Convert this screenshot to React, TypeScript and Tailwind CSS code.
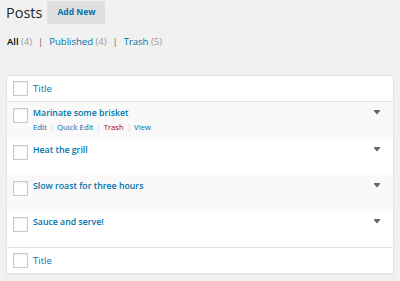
const POSTS = [
  { title: 'Marinate some brisket', actions: true },
  { title: 'Heat the grill' },
  { title: 'Slow roast for three hours' },
  { title: 'Sauce and serve!' },
];

function Checkbox() {
  return (
    <span className="block w-[15px] h-[15px] shrink-0 bg-white border border-[#c9c9c9] shadow-[inset_0_1px_2px_rgba(0,0,0,0.08)]" />
  );
}

function Toggle() {
  return (
    <svg width="6" height="5" viewBox="0 0 6 5" className="block">
      <polygon points="0,0 6,0 6,1 3,4.5 0,1" fill="#666" />
    </svg>
  );
}

export default function App() {
  return (
    <div className="w-[400px] h-[281px] overflow-hidden bg-[#f1f1f1] font-['Open_Sans',sans-serif] text-[#444]">
      <div className="flex items-center h-[23px] mt-[1px] pl-[6px]">
        <h1 className="text-[14.5px] leading-[23px] text-[#23282d] mr-[5px]">Posts</h1>
        <a className="h-[23px] px-[10px] flex items-center bg-[#e0e0e0] text-[8.5px] font-bold text-[#0073aa]">
          Add New
        </a>
      </div>

      <ul className="flex items-center mt-[12px] pl-[7px] text-[9.5px] leading-[12px]">
        <li>
          <span className="font-semibold text-black">All</span>{' '}
          <span className="text-[#999]">(4)</span>
          <span className="mx-[6px] text-[#666]">|</span>
        </li>
        <li>
          <span className="text-[#0073aa]">Published</span>{' '}
          <span className="text-[#999]">(4)</span>
          <span className="mx-[6px] text-[#666]">|</span>
        </li>
        <li>
          <span className="text-[#0073aa]">Trash</span>{' '}
          <span className="text-[#999]">(5)</span>
        </li>
      </ul>

      <div className="mt-[27px] mx-[6px] bg-white border border-[#e5e5e5] shadow-[0_1px_1px_rgba(0,0,0,0.04)]">
        <div className="h-[26px] flex items-center pl-[6px] border-b border-[#e1e1e1]">
          <Checkbox />
          <span className="ml-[5px] text-[9.5px] leading-[12px] text-[#0073aa]">Title</span>
        </div>

        {POSTS.map((p, i) => (
          <div
            key={p.title}
            className={`${i === 0 ? 'h-[37px]' : 'h-[36px]'} flex items-start pl-[6px] pr-[13px] pt-[6px] ${i % 2 === 0 ? 'bg-[#f9f9f9]' : 'bg-white'}`}
          >
            <Checkbox />
            <div className="ml-[5px] -mt-[2px] flex-1">
              <div className="text-[8.75px] leading-[14px] font-semibold text-[#0073aa]">{p.title}</div>
              {p.actions && (
                <div className="text-[7.75px] leading-[12px] mt-[1px] text-[#ddd]">
                  <span className="text-[#0073aa]">Edit</span>
                  <span className="mx-[3px]">|</span>
                  <span className="text-[#0073aa]">Quick Edit</span>
                  <span className="mx-[3px]">|</span>
                  <span className="text-[#aa0000]">Trash</span>
                  <span className="mx-[3px]">|</span>
                  <span className="text-[#0073aa]">View</span>
                </div>
              )}
            </div>
            <div className="mt-[2px]">
              <Toggle />
            </div>
          </div>
        ))}

        <div className="h-[26px] flex items-center pl-[6px] border-t border-[#e1e1e1]">
          <Checkbox />
          <span className="ml-[5px] text-[9.5px] leading-[12px] text-[#0073aa]">Title</span>
        </div>
      </div>
    </div>
  );
}
